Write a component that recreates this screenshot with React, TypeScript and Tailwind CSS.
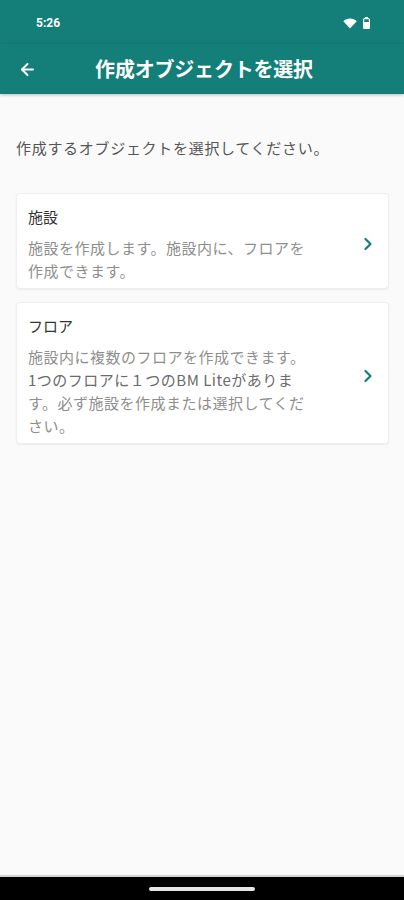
import { ArrowLeft, ChevronRight } from "lucide-react";

const items = [
  {
    id: "facility",
    title: "施設",
    lines: ["施設を作成します。施設内に、フロアを", "作成できます。"],
  },
  {
    id: "floor",
    title: "フロア",
    lines: ["施設内に複数のフロアを作成できます。", "1つのフロアに１つのBM Liteがありま", "す。必ず施設を作成または選択してくだ", "さい。"],
  },
];

function StatusBar() {
  return (
    <div className="h-[44px] flex items-center justify-between pl-[36px] pr-[34px] bg-[#147e79] text-white">
      <span className="text-[12px] font-bold pt-[2px]" style={{ fontFamily: "Roboto, sans-serif" }}>5:26</span>
      <div className="flex items-center gap-[6px] pt-[2px]">
        <svg width="14" height="11" viewBox="0 0 14 11">
          <path d="M7 10.5 0.3 3.2C2 1.6 4.4 0.6 7 0.6s5 1 6.7 2.6Z" fill="white" />
        </svg>
        <svg width="7" height="12" viewBox="0 0 7 12">
          <rect x="2" y="0" width="3" height="2" fill="white" />
          <rect x="0.6" y="1.6" width="5.8" height="10" rx="1" fill="none" stroke="white" strokeWidth="1.2" />
          <rect x="1" y="5" width="5" height="6.4" fill="white" />
        </svg>
      </div>
    </div>
  );
}

export default function App() {
  return (
    <div className="w-[404px] h-[900px] flex flex-col bg-[#fafafa]" style={{ fontFamily: '"Noto Sans CJK JP", "Noto Sans", sans-serif' }}>
      <StatusBar />
      <header className="relative h-[50px] flex items-center justify-center bg-[#147e79] text-white shadow-[0_1px_3px_rgba(0,0,0,0.25)] z-10">
        <ArrowLeft className="absolute left-[18px] top-[16px]" size={19} strokeWidth={2.4} />
        <h1 className="text-[20px] font-bold tracking-[-0.2px] pl-[4px]">作成オブジェクトを選択</h1>
      </header>

      <main className="flex-1 pl-[16px] pr-[15px] pt-[42px]">
        <p className="text-[15px] leading-[24px] tracking-[0.7px] text-[#555555]">作成するオブジェクトを選択してください。</p>

        <div className="mt-[33px] flex flex-col gap-[13px]">
          {items.map((i) => (
            <div key={i.id} className="flex items-center bg-white rounded-[4px] border border-[#eeeeee] shadow-[0_1px_2px_rgba(0,0,0,0.06)] pl-[11px] pr-[10px] pt-[11px] pb-[6px]">
              <div className="flex-1">
                <h3 className="text-[15px] leading-[23px] text-[#333333]">{i.title}</h3>
                <div className="mt-[8px] text-[15px] leading-[23px] tracking-[0.5px] text-[#8e8e8e]">
                  {i.lines.map((l, n) => (
                    <span key={n} className={i.id === "floor" && n === 1 ? "block text-[#6b6b6b]" : "block"}>{l}</span>
                  ))}
                </div>
              </div>
              <ChevronRight className="text-[#147e79]" size={20} strokeWidth={2.6} />
            </div>
          ))}
        </div>
      </main>

      <div className="h-[2px] bg-[#d4d4d4]" />
      <nav className="h-[23px] bg-black flex items-start justify-center pt-[10px]">
        <div className="w-[106px] h-[4px] rounded-full bg-[#e6e6e6]" />
      </nav>
    </div>
  );
}
